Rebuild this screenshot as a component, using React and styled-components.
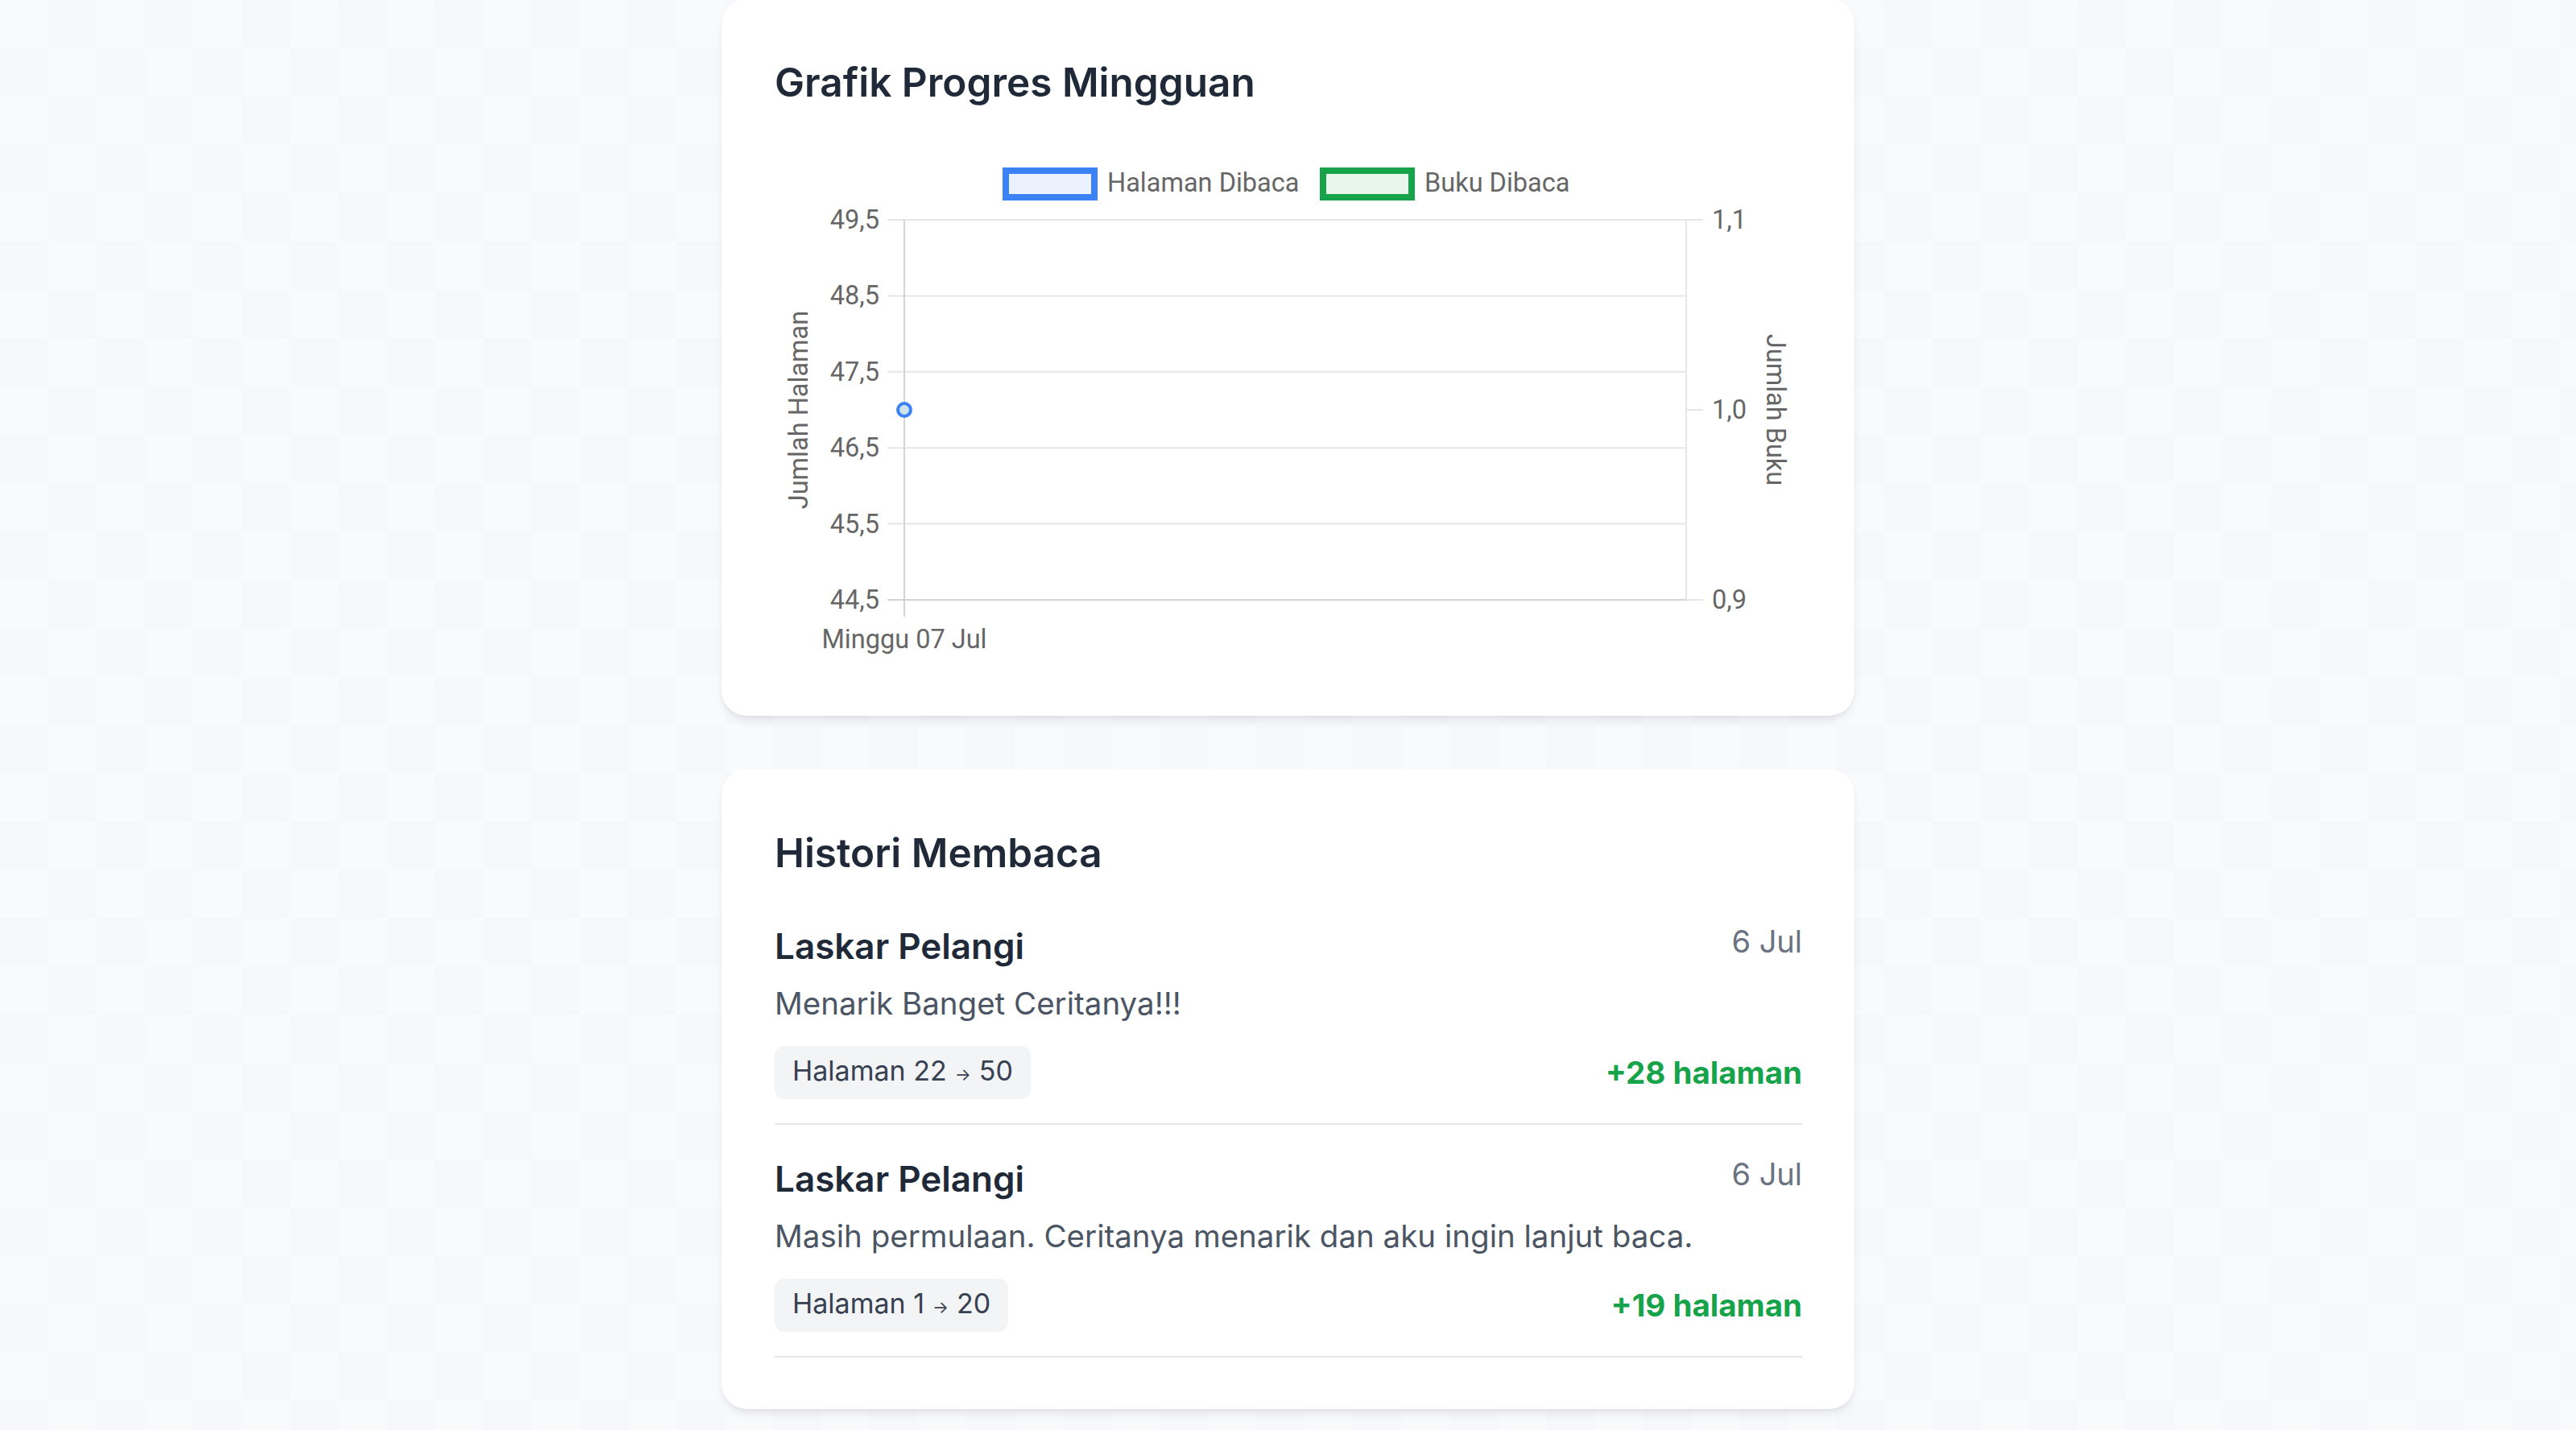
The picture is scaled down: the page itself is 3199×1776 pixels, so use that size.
import React from 'react';
import styled, { createGlobalStyle } from 'styled-components';

const colors = {
  page: '#f8fafc',
  card: '#ffffff',
  heading: '#1f2937',
  body: '#4b5563',
  muted: '#6b7280',
  chip: '#f3f4f6',
  chipText: '#374151',
  line: '#e5e7eb',
  green: '#16a34a',
  blue: '#3b82f6',
  chartText: '#666666',
  grid: '#e6e6e6',
  axis: '#d4d4d4',
};

const GlobalStyle = createGlobalStyle`
  body {
    margin: 0;
    background-color: ${colors.page};
    background-image:
      linear-gradient(45deg, rgba(148, 163, 184, 0.02) 25%, transparent 25%, transparent 75%, rgba(148, 163, 184, 0.02) 75%),
      linear-gradient(45deg, rgba(148, 163, 184, 0.02) 25%, transparent 25%, transparent 75%, rgba(148, 163, 184, 0.02) 75%);
    background-size: 120px 120px;
    background-position: 0 0, 60px 60px;
    font-family: Inter, "Noto Sans", sans-serif;
  }
`;

const Page = styled.main`
  min-height: 100vh;
  display: flex;
  flex-direction: column;
  align-items: center;
  padding-bottom: 40px;
`;

const Card = styled.section`
  box-sizing: border-box;
  width: 1407px;
  background: ${colors.card};
  border-radius: 32px;
  padding: 66px 65px 64px 66px;
  box-shadow: 0 8px 14px -4px rgba(15, 23, 42, 0.1), 0 2px 6px -2px rgba(15, 23, 42, 0.06);

  &:first-child {
    margin-top: -2px;
  }
  & + & {
    margin-top: 66px;
  }
`;

const CardTitle = styled.h2`
  margin: 0;
  font-size: 49.5px;
  line-height: 76px;
  font-weight: 600;
  color: ${colors.heading};
`;

const ChartWrap = styled.div`
  margin-top: 51px;

  svg {
    display: block;
    font-family: Roboto, "Liberation Sans", sans-serif;
    font-size: 32.5px;
  }
  text {
    fill: ${colors.chartText};
  }
`;

const HistoryList = styled.div`
  margin-top: 48px;
`;

const Entry = styled.article`
  padding-bottom: 30px;
  border-bottom: 2px solid ${colors.line};

  & + & {
    margin-top: 37px;
  }
`;

const EntryHead = styled.div`
  display: flex;
  justify-content: space-between;
  align-items: flex-start;
`;

const BookTitle = styled.h3`
  margin: 0;
  font-size: 44px;
  line-height: 60px;
  font-weight: 600;
  color: ${colors.heading};
`;

const EntryDate = styled.span`
  font-size: 38px;
  line-height: 48px;
  color: ${colors.muted};
`;

const Note = styled.p`
  margin: 15px 0 0;
  font-size: 38.5px;
  line-height: 52px;
  color: ${colors.body};
`;

const EntryFoot = styled.div`
  display: flex;
  justify-content: space-between;
  align-items: center;
  margin-top: 27px;
`;

const PageRange = styled.span`
  background: ${colors.chip};
  border-radius: 12px;
  padding: 12px 22px;
  font-size: 34px;
  line-height: 37px;
  color: ${colors.chipText};
`;

const Arrow = styled.span`
  font-size: 21px;
  margin: 0 10px;
`;

const Gain = styled.span`
  font-size: 38.5px;
  line-height: 46px;
  font-weight: 700;
  color: ${colors.green};
`;

const leftTicks = ['49,5', '48,5', '47,5', '46,5', '45,5', '44,5'];
const rightTicks = ['1,1', '1,0', '0,9'];

const top = 82;
const bottom = 554;
const xLeft = 161;
const xRight = 1132;

const WeeklyChart = () => {
  const step = (bottom - top) / (leftTicks.length - 1);
  const rStep = (bottom - top) / (rightTicks.length - 1);
  return (
    <svg width="1276" height="634" viewBox="0 0 1276 634">
      {/* legend */}
      <rect x="287" y="21" width="110" height="33" fill="#ebf2fe" stroke={colors.blue} strokeWidth="8" />
      <text x="413" y="47">Halaman Dibaca</text>
      <rect x="681" y="21" width="110" height="33" fill="#e8f6ec" stroke={colors.green} strokeWidth="8" />
      <text x="807" y="47">Buku Dibaca</text>

      {/* grid + left ticks */}
      {leftTicks.map((t, i) => {
        const y = top + step * i;
        return (
          <g key={t}>
            <line x1="140" x2={xRight} y1={y} y2={y} stroke={i === leftTicks.length - 1 ? colors.axis : colors.grid} strokeWidth="2" />
            <text x="130" y={y + 11} textAnchor="end">{t}</text>
          </g>
        );
      })}

      {/* right axis */}
      <line x1={xRight} x2={xRight} y1={top} y2={bottom} stroke={colors.grid} strokeWidth="2" />
      {rightTicks.map((t, i) => {
        const y = top + rStep * i;
        return (
          <g key={t}>
            <line x1={xRight} x2={xRight + 21} y1={y} y2={y} stroke={colors.grid} strokeWidth="2" />
            <text x="1164" y={y + 11}>{t}</text>
          </g>
        );
      })}

      {/* left axis / x tick */}
      <line x1={xLeft} x2={xLeft} y1={top} y2={bottom + 21} stroke={colors.axis} strokeWidth="2" />
      <text x={xLeft} y="614" textAnchor="middle">Minggu 07 Jul</text>

      {/* axis titles */}
      <text transform="translate(30 318) rotate(-90)" textAnchor="middle" dominantBaseline="central">Jumlah Halaman</text>
      <text transform="translate(1243 318) rotate(90)" textAnchor="middle" dominantBaseline="central">Jumlah Buku</text>

      {/* data point */}
      <circle cx={xLeft} cy="318" r="8" fill="#cfe4e8" stroke={colors.blue} strokeWidth="4" />
    </svg>
  );
};

const history = [
  { id: 1, book: 'Laskar Pelangi', date: '6 Jul', note: 'Menarik Banget Ceritanya!!!', from: 22, to: 50 },
  { id: 2, book: 'Laskar Pelangi', date: '6 Jul', note: 'Masih permulaan. Ceritanya menarik dan aku ingin lanjut baca.', from: 1, to: 20 },
];

const App = () => {
  return (
    <>
      <GlobalStyle />
      <Page>
        <Card>
          <CardTitle>Grafik Progres Mingguan</CardTitle>
          <ChartWrap>
            <WeeklyChart />
          </ChartWrap>
        </Card>

        <Card>
          <CardTitle>Histori Membaca</CardTitle>
          <HistoryList>
            {history.map((h) => (
              <Entry key={h.id}>
                <EntryHead>
                  <BookTitle>{h.book}</BookTitle>
                  <EntryDate>{h.date}</EntryDate>
                </EntryHead>
                <Note>{h.note}</Note>
                <EntryFoot>
                  <PageRange>
                    Halaman {h.from}<Arrow>→</Arrow>{h.to}
                  </PageRange>
                  <Gain>+{h.to - h.from} halaman</Gain>
                </EntryFoot>
              </Entry>
            ))}
          </HistoryList>
        </Card>
      </Page>
    </>
  );
};

export default App;
